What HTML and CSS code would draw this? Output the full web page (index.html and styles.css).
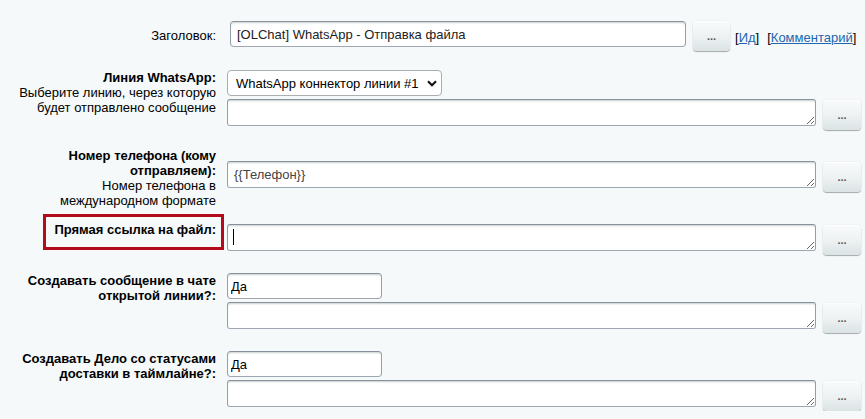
FILE: index.html
```html
<!DOCTYPE html>
<html lang="ru">
<head>
<meta charset="utf-8">
<title>WhatsApp - Отправка файла</title>
<link rel="stylesheet" href="styles.css">
</head>
<body>
<div class="form">
  <div class="row row-title">
    <div class="label"><span class="plain">Заголовок:</span></div>
    <div class="field">
      <div class="line">
        <input class="txt title-input" type="text" value="[OLChat] WhatsApp - Отправка файла">
        <button class="dots" type="button">...</button>
        <span class="lnk">[<a href="#">Ид</a>]</span>
        <span class="lnk lnk2">[<a href="#">Комментарий</a>]</span>
      </div>
    </div>
  </div>

  <div class="row row-line">
    <div class="label">
      <div class="name">Линия WhatsApp:</div>
      <div class="desc">Выберите линию, через которую<br>будет отправлено сообщение</div>
    </div>
    <div class="field stack">
      <span class="sel-wrap">
        <select class="sel"><option>WhatsApp коннектор линии #1</option></select>
        <svg class="chev" width="10" height="7" viewBox="0 0 10 7"><path d="M1 1.2 L5 5.2 L9 1.2" fill="none" stroke="#111" stroke-width="2.1"/></svg>
      </span>
      <div class="line">
        <textarea class="area"></textarea>
        <button class="dots" type="button">...</button>
      </div>
    </div>
  </div>

  <div class="row row-phone">
    <div class="label">
      <div class="name">Номер телефона (кому<br>отправляем):</div>
      <div class="desc">Номер телефона в<br>международном формате</div>
    </div>
    <div class="field field-phone">
      <div class="line">
        <textarea class="area">{{Телефон}}</textarea>
        <button class="dots" type="button">...</button>
      </div>
    </div>
  </div>

  <div class="row row-file">
    <div class="label">
      <div class="mark"><span class="name">Прямая ссылка на файл:</span></div>
    </div>
    <div class="field field-file">
      <div class="line">
        <span class="area-wrap">
          <textarea class="area"></textarea>
          <span class="caret"></span>
        </span>
        <button class="dots" type="button">...</button>
      </div>
    </div>
  </div>

  <div class="row row-bool">
    <div class="label">
      <div class="name">Создавать сообщение в чате<br>открытой линии?:</div>
    </div>
    <div class="field stack">
      <input class="yes" type="text" value="Да">
      <div class="line">
        <textarea class="area"></textarea>
        <button class="dots" type="button">...</button>
      </div>
    </div>
  </div>

  <div class="row row-bool">
    <div class="label">
      <div class="name">Создавать Дело со статусами<br>доставки в таймлайне?:</div>
    </div>
    <div class="field stack">
      <input class="yes" type="text" value="Да">
      <div class="line">
        <textarea class="area"></textarea>
        <button class="dots" type="button">...</button>
      </div>
    </div>
  </div>
</div>
</body>
</html>
```

FILE: styles.css
```css
* { box-sizing: border-box; }

html, body {
  margin: 0;
  padding: 0;
  background: #f5f9f9;
}

body {
  font-family: "Liberation Sans", Arial, Helvetica, sans-serif;
  font-size: 13px;
  line-height: 15px;
  color: #000;
}

.form {
  display: flex;
  flex-direction: column;
  padding-top: 21px;
}

.row {
  display: grid;
  grid-template-columns: 224px 1fr;
  align-items: start;
}

.row-line { margin-top: 19px; }
.row-phone { margin-top: 18px; }
.row-file { margin-top: 6px; }
.row-bool { margin-top: 18px; }

.label {
  text-align: right;
  padding-right: 8px;
}

.row-title .label { padding-top: 7px; }

.name { font-weight: bold; }

.field {
  padding-left: 3px;
}

.field-phone { margin-top: 13px; }
.field-file { margin-top: 10px; }

.stack {
  display: flex;
  flex-direction: column;
  align-items: flex-start;
  gap: 3px;
}

.line {
  display: flex;
  align-items: flex-start;
}

.txt, .area, .yes {
  font-family: "Liberation Sans", Arial, Helvetica, sans-serif;
  font-size: 13px;
  color: #000;
  background: #fff;
  border: 1px solid;
  border-color: #87919c #959ea9 #9ea7b1 #959ea9;
  box-shadow: inset 0 2px 2px -1px rgba(180, 188, 191, 0.7);
  outline: none;
  margin: 0;
}

.title-input {
  margin-left: 3px;
  width: 456px;
  height: 26px;
  padding: 0 6px;
  border-radius: 4px;
  color: #222;
}

.area {
  width: 589px;
  height: 27px;
  padding: 5px 6px 0;
  border-radius: 3px;
  line-height: 15px;
  color: #444;
  resize: both;
  display: block;
}

.area-wrap {
  position: relative;
  display: block;
}

.caret {
  position: absolute;
  left: 6px;
  top: 5px;
  width: 1px;
  height: 16px;
  background: #000;
}

.yes {
  width: 155px;
  height: 26px;
  padding: 0 3px;
  border-radius: 4px;
}

.dots {
  flex: none;
  width: 38px;
  height: 30px;
  margin: 1px 0 0 7px;
  padding: 0;
  border: none;
  border-radius: 4px;
  background: linear-gradient(to bottom, #f9fbfb 0%, #eef2f3 50%, #dbe3e5 100%);
  box-shadow: 0 0 1px rgba(0, 0, 0, 0.25), 0 1px 1px rgba(0, 0, 0, 0.3), inset 0 1px 0 #fff;
  font-family: "Liberation Sans", Arial, sans-serif;
  font-size: 11px;
  font-weight: bold;
  color: #555;
  line-height: 15px;
  cursor: pointer;
}

.row-title .dots {
  width: 37px;
  margin-top: 0;
}

.lnk {
  margin-left: 5px;
  margin-top: 9px;
  white-space: nowrap;
}

.lnk2 { margin-left: 8px; }

.lnk a {
  color: #2067b0;
  text-decoration: underline;
}

.sel-wrap {
  position: relative;
  display: block;
}

.sel {
  appearance: none;
  -webkit-appearance: none;
  display: block;
  width: 215px;
  height: 26px;
  margin: 0;
  padding: 0 0 0 8px;
  font-family: "Liberation Sans", Arial, Helvetica, sans-serif;
  font-size: 13px;
  color: #000;
  background: #fff;
  border: 1px solid #a9aeb1;
  border-radius: 4px;
  outline: none;
}

.chev {
  position: absolute;
  right: 5px;
  top: 10px;
  pointer-events: none;
}

.mark {
  display: inline-block;
  width: 181px;
  height: 36px;
  margin-right: -8px;
  padding: 5px 5px 0 0;
  border: 3px solid #b40a1b;
  text-align: right;
}
```
